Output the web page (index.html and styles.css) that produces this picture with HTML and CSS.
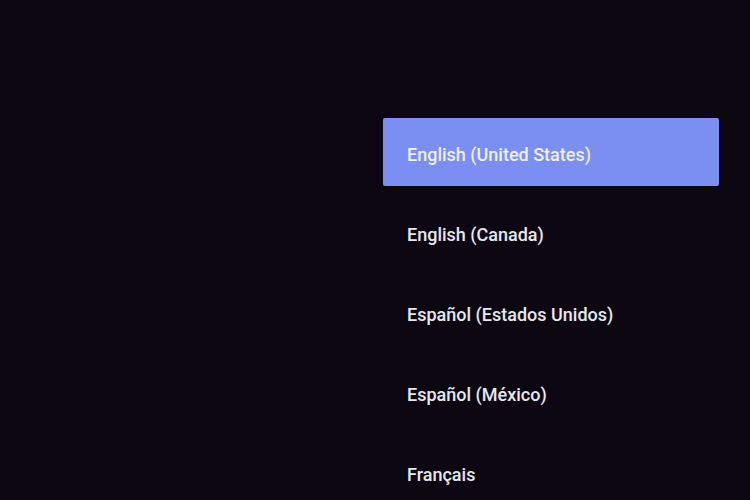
FILE: index.html
```html
<!DOCTYPE html>
<html lang="en">
<head>
  <meta charset="UTF-8">
  <meta name="viewport" content="width=device-width, initial-scale=1.0">
  <title>Language</title>
  <link rel="stylesheet" href="styles.css">
</head>
<body>
  <main class="screen">
    <ul class="lang-list">
      <li class="lang active">English (United States)</li>
      <li class="lang">English (Canada)</li>
      <li class="lang">Español (Estados Unidos)</li>
      <li class="lang">Español (México)</li>
      <li class="lang">Français</li>
    </ul>
  </main>
</body>
</html>
```

FILE: styles.css
```css
body,
main,
ul,
li {
  margin: 0;
  padding: 0;
}

li {
  list-style: none;
}

body {
  background: #0d0712;
  font-family: Roboto, "Liberation Sans", sans-serif;
  overflow: hidden;
}

.screen {
  height: 500px;
  padding: 118px 0 0 383px;
  box-sizing: border-box;
}

.lang-list {
  width: 336px;
  display: flex;
  flex-direction: column;
  gap: 12px;
}

.lang {
  height: 68px;
  box-sizing: border-box;
  padding: 4px 24px 0;
  display: flex;
  align-items: center;
  font-size: 18px;
  font-weight: 500;
  color: #e6e9ee;
  border-radius: 2px;
}

.lang.active {
  background: #7b8ef2;
  color: #eef0fb;
}
```
